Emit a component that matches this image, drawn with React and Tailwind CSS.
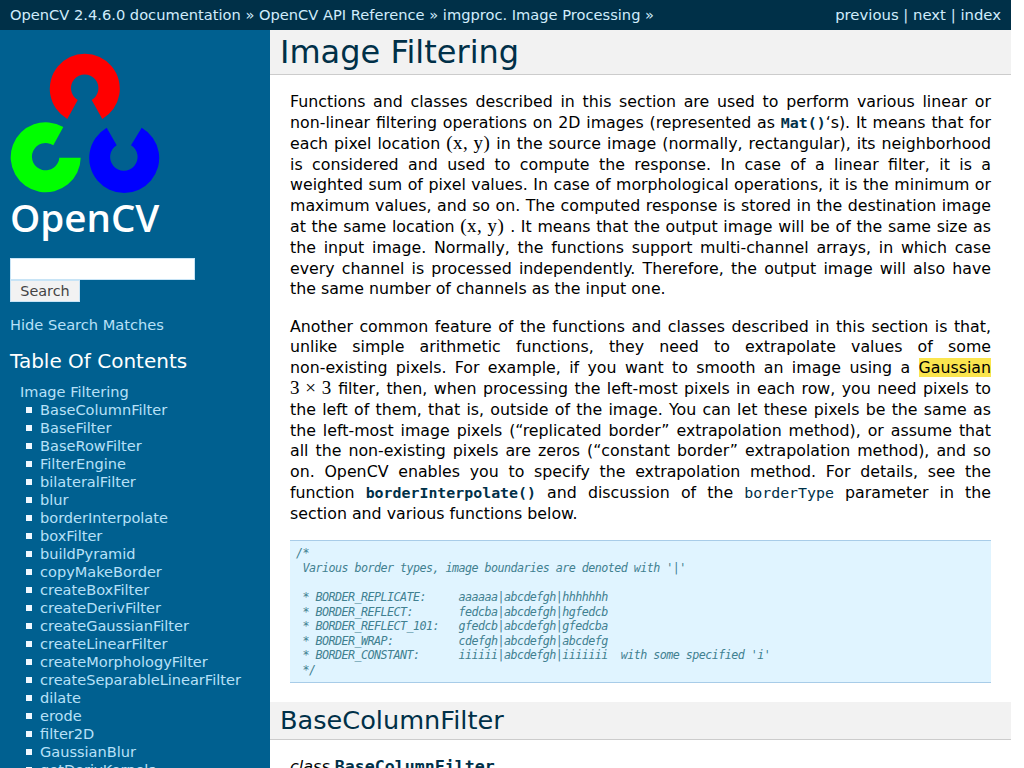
import React from 'react';

const tocItems = [
  'BaseColumnFilter', 'BaseFilter', 'BaseRowFilter', 'FilterEngine', 'bilateralFilter', 'blur',
  'borderInterpolate', 'boxFilter', 'buildPyramid', 'copyMakeBorder', 'createBoxFilter',
  'createDerivFilter', 'createGaussianFilter', 'createLinearFilter', 'createMorphologyFilter',
  'createSeparableLinearFilter', 'dilate', 'erode', 'filter2D', 'GaussianBlur', 'getDerivKernels',
];

const codeBlock = `/*
 Various border types, image boundaries are denoted with '|'

 * BORDER_REPLICATE:     aaaaaa|abcdefgh|hhhhhhh
 * BORDER_REFLECT:       fedcba|abcdefgh|hgfedcb
 * BORDER_REFLECT_101:   gfedcb|abcdefgh|gfedcba
 * BORDER_WRAP:          cdefgh|abcdefgh|abcdefg
 * BORDER_CONSTANT:      iiiiii|abcdefgh|iiiiiii  with some specified 'i'
 */`;

function Logo() {
  return (
    <svg width="170" height="145" viewBox="0 0 170 145" className="block">
      {/* coordinates are page pixels, shifted back to the sidebar's corner */}
      <g transform="translate(-10,-50)">
        <path fill="#ff0000" d="M67.3 119 A35 35 0 1 1 102.3 119 L91.7 100 A13.7 13.7 0 1 0 77.7 100 Z" />
        <path fill="#00ff00" d="M63.3 127 A35 35 0 1 0 80.7 157.7 L59.3 157.7 A13.7 13.7 0 1 1 53.3 145.3 Z" />
        <path fill="#0000ff" d="M106.7 127.7 A35 35 0 1 0 141.7 127.7 L131 145.3 A13.7 13.7 0 1 1 116.7 145.3 Z" />
      </g>
    </svg>
  );
}

function Sidebar() {
  return (
    <aside className="w-[270px] shrink-0 bg-[#006090] pl-[10px] h-[738px] overflow-hidden">
      <div className="h-[228px] pt-[20px]">
        <Logo />
        <div className="-mt-[3px] font-['Open_Sans',sans-serif] font-semibold text-[38.5px] leading-[50px] text-white">OpenCV</div>
      </div>
      <div className="h-[22px] w-[185px] bg-white border border-[#c8e4f6]"></div>
      <div className="h-[22px] w-[70px] bg-[#f2f2f2] border border-[#c8e4f6] text-center text-[14.4px] leading-[21px] text-[#444444]">Search</div>
      <p className="mt-[12px] text-[14.6px] leading-[21px] text-[#b8e0f8]">Hide Search Matches</p>
      <h3 className="mt-[11px] text-[20px] leading-[30px] text-white">Table Of Contents</h3>
      <div className="mt-[7px] ml-[10px] text-[14.55px] leading-[18px] text-[#b8e0f8]">
        <div>Image Filtering</div>
        <ul className="ml-[10px]">
          {tocItems.map((item) => (
            <li key={item} className="flex items-center">
              <span className="w-[6px] h-[6px] bg-[#f0f8ff] ml-[-4px] mr-[8px] shrink-0"></span>
              <span className="whitespace-nowrap">{item}</span>
            </li>
          ))}
        </ul>
      </div>
    </aside>
  );
}

function MathText({ children }) {
  return <span className="inline-block whitespace-nowrap font-['Liberation_Serif',serif] text-[19px] leading-[10px] tracking-[0.5px]">{children}</span>;
}

function NoBreak({ children }) {
  return <span className="whitespace-nowrap">{children}</span>;
}

export default function App() {
  return (
    <div className="w-[1011px] h-[768px] overflow-hidden bg-white font-['DejaVu_Sans',sans-serif]">
      <header className="h-[30px] bg-[#003048] flex items-center justify-between px-[10px] text-[14.65px] text-[#d0ecfc]">
        <div>OpenCV 2.4.6.0 documentation » OpenCV API Reference » imgproc. Image Processing »</div>
        <div className="text-[14.85px]">previous | next | index</div>
      </header>
      <div className="flex">
        <Sidebar />
        <main className="flex-1 min-w-0">
          <h1 className="h-[45px] bg-[#f2f2f2] border-b border-[#cccccc] pl-[10px] text-[32px] leading-[44px] text-[#003048]">Image Filtering</h1>
          <div className="px-[20px] pt-[17.3px] text-[15.8px] leading-[20.8px] text-black text-justify">
            <p>
              Functions and classes described in this section are used to perform various linear or <NoBreak>non-linear</NoBreak> filtering operations on 2D images (represented as <span className="font-['DejaVu_Sans_Mono',monospace] font-bold text-[14.9px] text-[#003048]">Mat()</span>‘s). It means that for each pixel location <MathText>(x, y)</MathText> in the source image (normally, rectangular), its neighborhood is considered and used to compute the response. In case of a linear filter, it is a weighted sum of pixel values. In case of morphological operations, it is the minimum or maximum values, and so on. The computed response is stored in the destination image at the same location <MathText>(x, y)</MathText> . It means that the output image will be of the same size as the input image. Normally, the functions support <NoBreak>multi-channel</NoBreak> arrays, in which case every channel is processed independently. Therefore, the output image will also have the same number of channels as the input one.
            </p>
            <p className="mt-[16.4px]">
              Another common feature of the functions and classes described in this section is that, unlike simple arithmetic functions, they need to extrapolate values of some <NoBreak>non-existing</NoBreak> pixels. For example, if you want to smooth an image using a <span className="bg-[#fbe54e]">Gaussian</span> <MathText>3 × 3</MathText> filter, then, when processing the <NoBreak>left-most</NoBreak> pixels in each row, you need pixels to the left of them, that is, outside of the image. You can let these pixels be the same as the <NoBreak>left-most</NoBreak> image pixels (“replicated border” extrapolation method), or assume that all the <NoBreak>non-existing</NoBreak> pixels are zeros (“constant border” extrapolation method), and so on. OpenCV enables you to specify the extrapolation method. For details, see the function <span className="font-['DejaVu_Sans_Mono',monospace] font-bold text-[14.9px] text-[#003048]">borderInterpolate()</span> and discussion of the <span className="font-['DejaVu_Sans_Mono',monospace] text-[14.9px] text-[#003048]">borderType</span> parameter in the section and various functions below.
            </p>
            <pre className="mt-[15.6px] h-[143px] bg-[#e0f4ff] border-y border-[#a8cce8] pl-[6px] pt-[5px] font-['DejaVu_Sans_Mono',monospace] italic text-[11.7px] tracking-[-0.54px] leading-[14.6px] text-[#408090] text-left">{codeBlock}</pre>
          </div>
          <h2 className="mt-[19px] h-[38px] bg-[#f2f2f2] border-b border-[#cccccc] pl-[10px] text-[25.6px] leading-[36px] text-[#003048]">BaseColumnFilter</h2>
          <div className="pl-[20px] pt-[16px] text-[16px] leading-[21px] text-black">
            <em>class</em> <span className="font-['DejaVu_Sans_Mono',monospace] font-bold text-[16.6px] text-[#003048]">BaseColumnFilter</span>
          </div>
        </main>
      </div>
    </div>
  );
}
